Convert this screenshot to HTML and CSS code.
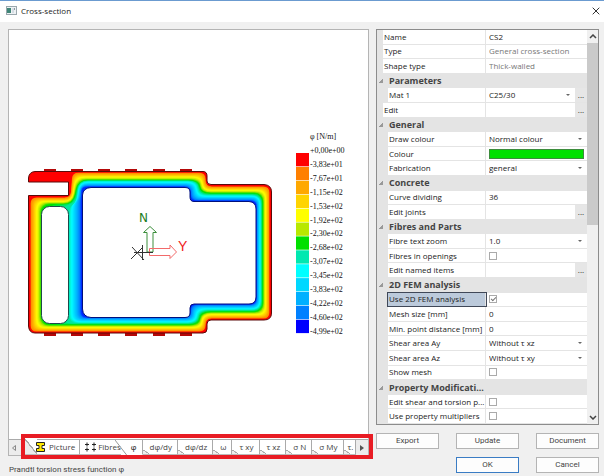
FILE: index.html
```html
<!DOCTYPE html>
<html lang="en">
<head>
<meta charset="utf-8">
<title>Cross-section</title>
<link rel="stylesheet" href="styles.css">
</head>
<body>
<div class="dialog">
  <header class="titlebar">
    <svg class="app-icon" width="11" height="9" viewBox="0 0 11 9" aria-hidden="true">
      <rect x=".5" y=".5" width="10" height="8" fill="#eef2f4" stroke="#9aa7ad"/>
      <rect x="1" y="2" width="4" height="5" fill="#3f8577"/>
      <rect x="6" y="2" width="2" height="5" fill="#d5dce4"/>
      <rect x="8" y="2" width="1" height="2" fill="#8a98a0"/>
    </svg>
    <h1>Cross-section</h1>
    <button class="close" type="button" aria-label="Close">
      <svg width="8" height="8" viewBox="0 0 8 8"><path d="M.7 .7L7.3 7.3M7.3 .7L.7 7.3" stroke="#333" fill="none"/></svg>
    </button>
  </header>

  <main class="content">
    <section class="viewer">
      <div class="view-panel">
        <svg class="drawing" viewBox="9 30 359 409" role="img" aria-label="Torsion stress function contours">
          <defs>
            <path id="outline" d="M28.500 195.500H68.500V182H28.500V178Q29 172 35 171.500H203Q207 171.500 207 176V181Q207 184.500 211 184.500H264Q271.500 185 271.500 192V313Q271.500 320 264 320H211Q207 320 207 324V329Q207 333 203 333H35Q29 333 28.500 326Z"/>
            <clipPath id="solid"><use href="#outline"/></clipPath>
          </defs>
          <g id="teeth"></g>
          <g clip-path="url(#solid)">
            <rect x="27" y="170" width="246" height="165" fill="#f00"/>
            <g id="bands"></g>
          </g>
          <use href="#outline" fill="none" stroke="#5a0a0a"/>
          <rect x="41.500" y="206.500" width="27" height="117" rx="8" fill="#fff" stroke="#1d4a4a"/>
          <path d="M91 187.500H185Q190 187.500 190 192V197Q190 201.500 194 201.500H249Q256 202 256 209V297Q256 304 249 304H194Q190 304 190 308V313Q190 317.500 185 317.500H91Q83 317 82.500 309V195Q83 188 91 187.500Z" fill="#fff" stroke="#00107c"/>
          <path d="M147 252V232.500H143.500L150 226.500L156.500 232.500H153V252Z" fill="none" stroke="#3c8f3c"/>
          <path d="M149.500 248.500H170V245L176.500 252L170 258.500V255.500H149.500Z" fill="none" stroke="#f26a6a"/>
          <path d="M132 247L144 260M131 259L143 247M134 252.500H153M142.500 245V260" fill="none" stroke="#333"/>
          <text class="axis axis-n" x="139" y="222">N</text>
          <text class="axis axis-y" x="178" y="251">Y</text>
          <g id="legend"></g>
        </svg>
        <nav class="tabs">
          <button class="scroll" type="button" aria-label="Previous tabs"><svg width="4" height="6" viewBox="0 0 4 6"><path d="M3.500 .5V5.500L.5 3Z" fill="none" stroke="#888"/></svg></button>
          <button class="tab first" type="button">
            <svg width="9" height="10" viewBox="0 0 9 10"><path d="M.5 .5H8.500V3.500H6V6.500H8.500V9.500H.5V6.500H3V3.500H.5Z" fill="#ffe800" stroke="#222"/></svg>Picture</button>
          <button class="tab fibres" type="button">
            <svg width="11" height="10" viewBox="0 0 11 10"><path d="M0 2.500H4M2 .5V4.500M7 2.500H11M9 .5V4.500M0 7.500H4M2 5.500V9.500M7 7.500H11M9 5.500V9.500" stroke="#222" fill="none"/></svg>Fibres</button>
          <button class="tab current" type="button"><svg class="slope" width="14" height="16" viewBox="0 0 14 16"><path d="M0 0L12 15.500" stroke="#999" fill="none"/></svg><span>φ</span></button>
          <button class="tab" type="button">dφ/dy</button>
          <button class="tab" type="button">dφ/dz</button>
          <button class="tab" type="button">ω</button>
          <button class="tab" type="button">τ xy</button>
          <button class="tab" type="button">τ xz</button>
          <button class="tab" type="button">σ N</button>
          <button class="tab" type="button">σ My</button>
          <button class="tab cut" type="button">τ.</button>
          <button class="scroll next" type="button" aria-label="Next tabs"><svg width="4" height="6" viewBox="0 0 4 6"><path d="M0 0V6L4 3Z" fill="#555"/></svg></button>
        </nav>
        <div class="marker"></div>
      </div>
      <p class="status">Prandtl torsion stress function φ</p>
    </section>

    <aside class="side">
      <div class="property-panel">
        <form class="properties">
          <div class="row top"><label for="name">Name</label><div class="value"><input id="name" type="text" value="CS2"></div></div>
          <div class="row top"><label for="type">Type</label><div class="value"><input id="type" type="text" readonly value="General cross-section"></div></div>
          <div class="row top"><label for="shape">Shape type</label><div class="value"><input id="shape" type="text" readonly value="Thick-walled"></div></div>
          <h2>Parameters</h2>
          <div class="row"><label for="mat">Mat 1</label><div class="value"><span class="pick"><select id="mat"><option>C25/30</option></select></span><button class="more" type="button" aria-label="Material">...</button></div></div>
          <div class="row top"><label for="edit">Edit</label><div class="value"><button id="edit" class="more" type="button">...</button></div></div>
          <h2>General</h2>
          <div class="row"><label for="draw">Draw colour</label><div class="value"><span class="pick"><select id="draw"><option>Normal colour</option></select></span></div></div>
          <div class="row"><label for="colour">Colour</label><div class="value"><input id="colour" type="color" value="#00e000"></div></div>
          <div class="row"><label for="fab">Fabrication</label><div class="value"><span class="pick"><select id="fab"><option>general</option></select></span></div></div>
          <h2>Concrete</h2>
          <div class="row"><label for="curve">Curve dividing</label><div class="value"><input id="curve" type="text" value="36"></div></div>
          <div class="row"><label for="joints">Edit joints</label><div class="value"><button id="joints" class="more" type="button">...</button></div></div>
          <h2>Fibres and Parts</h2>
          <div class="row"><label for="zoom">Fibre text zoom</label><div class="value"><span class="pick"><select id="zoom"><option>1.0</option></select></span></div></div>
          <div class="row"><label for="openings">Fibres in openings</label><div class="value"><input id="openings" type="checkbox"></div></div>
          <div class="row"><label for="items">Edit named items</label><div class="value"><button id="items" class="more" type="button">...</button></div></div>
          <h2>2D FEM analysis</h2>
          <div class="row selected"><label for="fem">Use 2D FEM analysis</label><div class="value"><input id="fem" type="checkbox" checked></div></div>
          <div class="row"><label for="mesh">Mesh size [mm]</label><div class="value"><input id="mesh" type="text" value="0"></div></div>
          <div class="row"><label for="dist">Min. point distance [mm]</label><div class="value"><input id="dist" type="text" value="0"></div></div>
          <div class="row"><label for="ay">Shear area Ay</label><div class="value"><span class="pick"><select id="ay"><option>Without τ xz</option></select></span></div></div>
          <div class="row"><label for="az">Shear area Az</label><div class="value"><span class="pick"><select id="az"><option>Without τ xy</option></select></span></div></div>
          <div class="row"><label for="show">Show mesh</label><div class="value"><input id="show" type="checkbox"></div></div>
          <h2>Property Modificati...</h2>
          <div class="row"><label for="shear">Edit shear and torsion p...</label><div class="value"><input id="shear" type="checkbox"></div></div>
          <div class="row"><label for="mult">Use property multipliers</label><div class="value"><input id="mult" type="checkbox"></div></div>
        </form>
        <div class="scrollbar" aria-hidden="true">
          <svg width="8" height="5" viewBox="0 0 8 5"><path d="M1 4L4 1L7 4" fill="none" stroke="#444" stroke-width="1.500"/></svg>
          <div class="thumb"></div><div class="track"></div>
          <svg width="8" height="5" viewBox="0 0 8 5"><path d="M1 1L4 4L7 1" fill="none" stroke="#444" stroke-width="1.500"/></svg>
        </div>
      </div>
      <div class="actions">
        <button type="button">Export</button>
        <button type="button">Update</button>
        <button type="button">Document</button>
        <button type="button" class="ok">OK</button>
        <button type="button">Cancel</button>
      </div>
    </aside>
  </main>
</div>
<script src="contours.js"></script>
</body>
</html>
```
FILE: styles.css
```css
* { box-sizing: border-box; }

body {
  margin: 0;
  background: #f0f0f0;
  color: #222;
  font: 8px/12px "Open Sans", "Noto Sans", sans-serif;
}

button, input, select {
  margin: 0;
  padding: 0;
  border: 0;
  border-radius: 0;
  background: none;
  color: inherit;
  font: inherit;
}

svg { display: block; flex: none; }

.dialog {
  display: flex;
  flex-direction: column;
  min-height: 100vh;
}

.titlebar {
  display: flex;
  align-items: center;
  gap: 4px;
  height: 22px;
  padding: 0 4px 2px 6px;
  border-top: 1px solid #6b9bd0;
  background: #fff;
}

.titlebar h1 {
  flex: 1;
  margin: 0;
  font-size: 8px;
  font-weight: 400;
}

.content {
  flex: 1;
  display: grid;
  grid-template-columns: minmax(0, 1fr) 223px;
  gap: 7px;
  padding: 7px 5px 4px 8px;
}

.viewer { display: flex; flex-direction: column; }

.view-panel {
  position: relative;
  flex: 1;
  display: flex;
  flex-direction: column;
  border: 1px solid #b4b4b4;
  background: #fff;
}

.drawing { flex: 1; width: 100%; min-height: 0; }

.axis { font: 14px "Liberation Sans", sans-serif; }
.axis-n { font: 12px "DejaVu Sans", sans-serif; fill: #1d7d1d; }
.axis-y { fill: #f02020; }
.legend-text { font: 8px "Liberation Serif", serif; fill: #111; }

.tabs {
  display: flex;
  height: 16px;
  border-top: 1px solid #aaa;
  color: #444;
}

.scroll {
  display: flex;
  align-items: center;
  justify-content: center;
  width: 16px;
  padding-right: 6px;
  background: #ececec;
}

.scroll.next { flex: 1; padding: 0; }

.tab {
  position: relative;
  display: flex;
  align-items: center;
  gap: 4px;
  padding: 0 5px 0 7px;
  border-right: 1px solid #aaa;
  border-bottom: 1px solid #bbb;
  white-space: nowrap;
}

.tab::before {
  content: "";
  position: absolute;
  left: 0;
  bottom: 0;
  width: 6px;
  height: 4px;
  background: linear-gradient(to top right, #eee 45%, #aaa 46%, #aaa 60%, #fff 61%);
}

.tab.first { padding: 0 4px 0 11px; }
.tab.first::before {
  width: 12px;
  height: 15px;
  background: linear-gradient(to top right, #ececec 46%, #aaa 47%, #aaa 53%, #fff 54%);
}
.tab.first svg { position: relative; }
.tab.fibres { gap: 2px; padding: 0 0 0 5px; border-right: 0; }
.tab.fibres::before, .tab.current::before { display: none; }
.tab.current { padding: 0 5px 0 10px; border-bottom-color: #fff; color: #111; }
.tab.current span { position: relative; }
.tab.cut { padding: 0 2px 0 4px; width: 12px; overflow: hidden; }

.slope { position: absolute; left: -6px; top: 0; }

.marker {
  position: absolute;
  left: 12px;
  right: -5px;
  bottom: -4px;
  height: 25px;
  border: 4px solid #e81c24;
  pointer-events: none;
}

.status {
  margin: 0;
  padding: 8px 0 0 1px;
  height: 17px;
  line-height: 12px;
  color: #444;
  font-family: Roboto, sans-serif;
}

.side { display: flex; flex-direction: column; gap: 8px; }

.property-panel {
  flex: 1;
  display: flex;
  border: 1px solid #8c8c8c;
  background: #e4e4e4;
}

.properties {
  flex: 1;
  display: grid;
  grid-auto-rows: minmax(14px, 1fr);
}

.properties h2 {
  display: flex;
  align-items: center;
  gap: 6px;
  margin: 0;
  padding-left: 2px;
  color: #444;
  font-size: 9px;
  font-weight: 700;
  line-height: 12px;
}

.properties h2::before {
  content: "";
  width: 4px;
  height: 4px;
  background: linear-gradient(to top left, #999 50%, transparent 51%);
}

.row {
  display: grid;
  grid-template-columns: 98px minmax(0, 1fr);
  margin-left: 11px;
  background: #fff;
  border-bottom: 1px solid #e4e4e4;
}

.row.top { grid-template-columns: 103px minmax(0, 1fr); margin-left: 6px; }

.row label {
  display: flex;
  align-items: center;
  padding-left: 1px;
  border-right: 1px solid #e4e4e4;
  white-space: nowrap;
}

.row.selected label { background: #bccadb; outline: 1px solid #404858; }

.value { display: flex; align-items: center; min-width: 0; padding-left: 3px; }
.value input[type="text"] { flex: 1; min-width: 0; height: 12px; }
.value input[readonly] { color: #777; }

.value input[type="color"] {
  flex: 1;
  height: 10px;
  margin: 0 3px 0 0;
  border: 1px solid #3c8c3c;
}
input[type="color"]::-webkit-color-swatch-wrapper { padding: 0; }
input[type="color"]::-webkit-color-swatch { border: 0; border-radius: 0; }

.value input[type="checkbox"] {
  appearance: none;
  width: 8px;
  height: 8px;
  border: 1px solid #aaa;
  background: #fff;
}

.value input[type="checkbox"]:checked::before {
  content: "";
  display: block;
  width: 4px;
  height: 2px;
  margin: 1px;
  border: solid #777;
  border-width: 0 0 1px 1px;
  transform: rotate(-45deg);
}

.pick { position: relative; flex: 1; display: flex; }
.pick select { appearance: none; flex: 1; height: 12px; }
.pick::after {
  content: "";
  position: absolute;
  right: 5px;
  top: 5px;
  border: 2px solid transparent;
  border-top-color: #666;
  border-bottom: 0;
}

.more {
  align-self: stretch;
  width: 12px;
  margin-left: auto;
  background: #e6e6e6;
  line-height: 8px;
}

.scrollbar {
  display: flex;
  flex-direction: column;
  align-items: center;
  gap: 4px;
  width: 11px;
  padding: 4px 0;
  background: #f0f0f0;
}

.thumb, .track { flex: 1; width: 100%; }
.thumb { background: #cacaca; }

.actions {
  display: grid;
  grid-template-columns: repeat(3, 1fr);
  gap: 8px 17px;
}

.actions button {
  height: 16px;
  border: 1px solid #b4b4b4;
  background: #fdfdfd;
  color: #444;
  font-family: Roboto, sans-serif;
}

.actions .ok { grid-column: 2; border-color: #3a7cc4; }
```
FILE: contours.js
```js
const NS = "http://www.w3.org/2000/svg";
const palette = ["#ff0000", "#ff8000", "#ffa800", "#ffd400", "#ffff00", "#b8e800", "#00e000",
  "#00e8b0", "#00ffff", "#00d8ff", "#00b0ff", "#0080ff", "#0000ff"];
const labels = ["+0,00e+00", "-3,83e+01", "-7,67e+01", "-1,15e+02", "-1,53e+02", "-1,92e+02", "-2,30e+02",
  "-2,68e+02", "-3,07e+02", "-3,45e+02", "-3,83e+02", "-4,22e+02", "-4,60e+02", "-4,99e+02"];

function add(parent, tag, attrs, text) {
  const el = document.createElementNS(NS, tag);
  for (const key in attrs) el.setAttribute(key, attrs[key]);
  if (text) el.textContent = text;
  parent.appendChild(el);
}

// Key contours of the stress function, from the outer edge to the inner opening.
const keys = [
  { t: 0, r: 5, p: [[28, 333], [28, 196], [70, 196], [71, 171], [207, 171], [207, 185], [271, 185], [271, 320], [207, 320], [207, 333]] },
  { t: 0.5, r: 10, p: [[41, 325], [41, 204], [73, 204], [78, 180], [199, 180], [201, 193], [263, 193], [263, 312], [201, 312], [199, 325]] },
  { t: 0.6, r: 9, p: [[69, 323], [69, 207], [76, 203], [79, 181], [197, 181], [199, 195], [261, 195], [261, 310], [199, 310], [197, 323]] },
  { t: 1, r: 6, p: [[82, 317], [82, 200], [82, 194], [82, 187], [190, 187], [190, 201], [256, 201], [256, 304], [190, 304], [190, 317]] }
];

function contour(t) {
  let i = 0;
  while (i < keys.length - 2 && t > keys[i + 1].t) i++;
  const a = keys[i], b = keys[i + 1], f = (t - a.t) / (b.t - a.t);
  const mix = (u, v) => u + (v - u) * f;
  const pts = a.p.map((p, n) => [mix(p[0], b.p[n][0]), mix(p[1], b.p[n][1])]);
  const radius = mix(a.r, b.r);
  const toward = (p, q) => {
    const d = Math.hypot(q[0] - p[0], q[1] - p[1]);
    const k = Math.min(radius, d / 2) / (d || 1);
    return [p[0] + (q[0] - p[0]) * k, p[1] + (q[1] - p[1]) * k];
  };
  return pts.map((p, n) => {
    const s = toward(p, pts[(n + pts.length - 1) % pts.length]);
    const e = toward(p, pts[(n + 1) % pts.length]);
    return (n ? "L" : "M") + s + "Q" + p + " " + e;
  }).join("") + "Z";
}

function shade(t) {
  const x = t * (palette.length - 1), i = Math.min(Math.floor(x), palette.length - 2), f = x - i;
  const rgb = c => [1, 3, 5].map(n => parseInt(c.slice(n, n + 2), 16));
  const a = rgb(palette[i]), b = rgb(palette[i + 1]);
  return "rgb(" + a.map((v, n) => Math.round(v + (b[n] - v) * f)) + ")";
}

const bands = document.getElementById("bands");
for (let n = 4; n <= 39; n++) {
  add(bands, "path", { d: contour(n / 40), fill: shade(n / 40) });
}

const teeth = document.getElementById("teeth");
for (const x of [44, 71, 98, 125, 153, 180]) {
  for (const y of [169, 333]) add(teeth, "rect", { x, y, width: 12, height: 3, fill: "#b40808" });
}

const legend = document.getElementById("legend");
const step = 13.9;
add(legend, "text", { x: 310, y: 139, class: "legend-text" }, "φ [N/m]");
palette.forEach((fill, n) => add(legend, "rect", { x: 296, y: 153 + n * step, width: 13, height: 13.3, fill }));
labels.forEach((text, n) => add(legend, "text", { x: 310, y: 153 + n * step, class: "legend-text" }, text));
```
